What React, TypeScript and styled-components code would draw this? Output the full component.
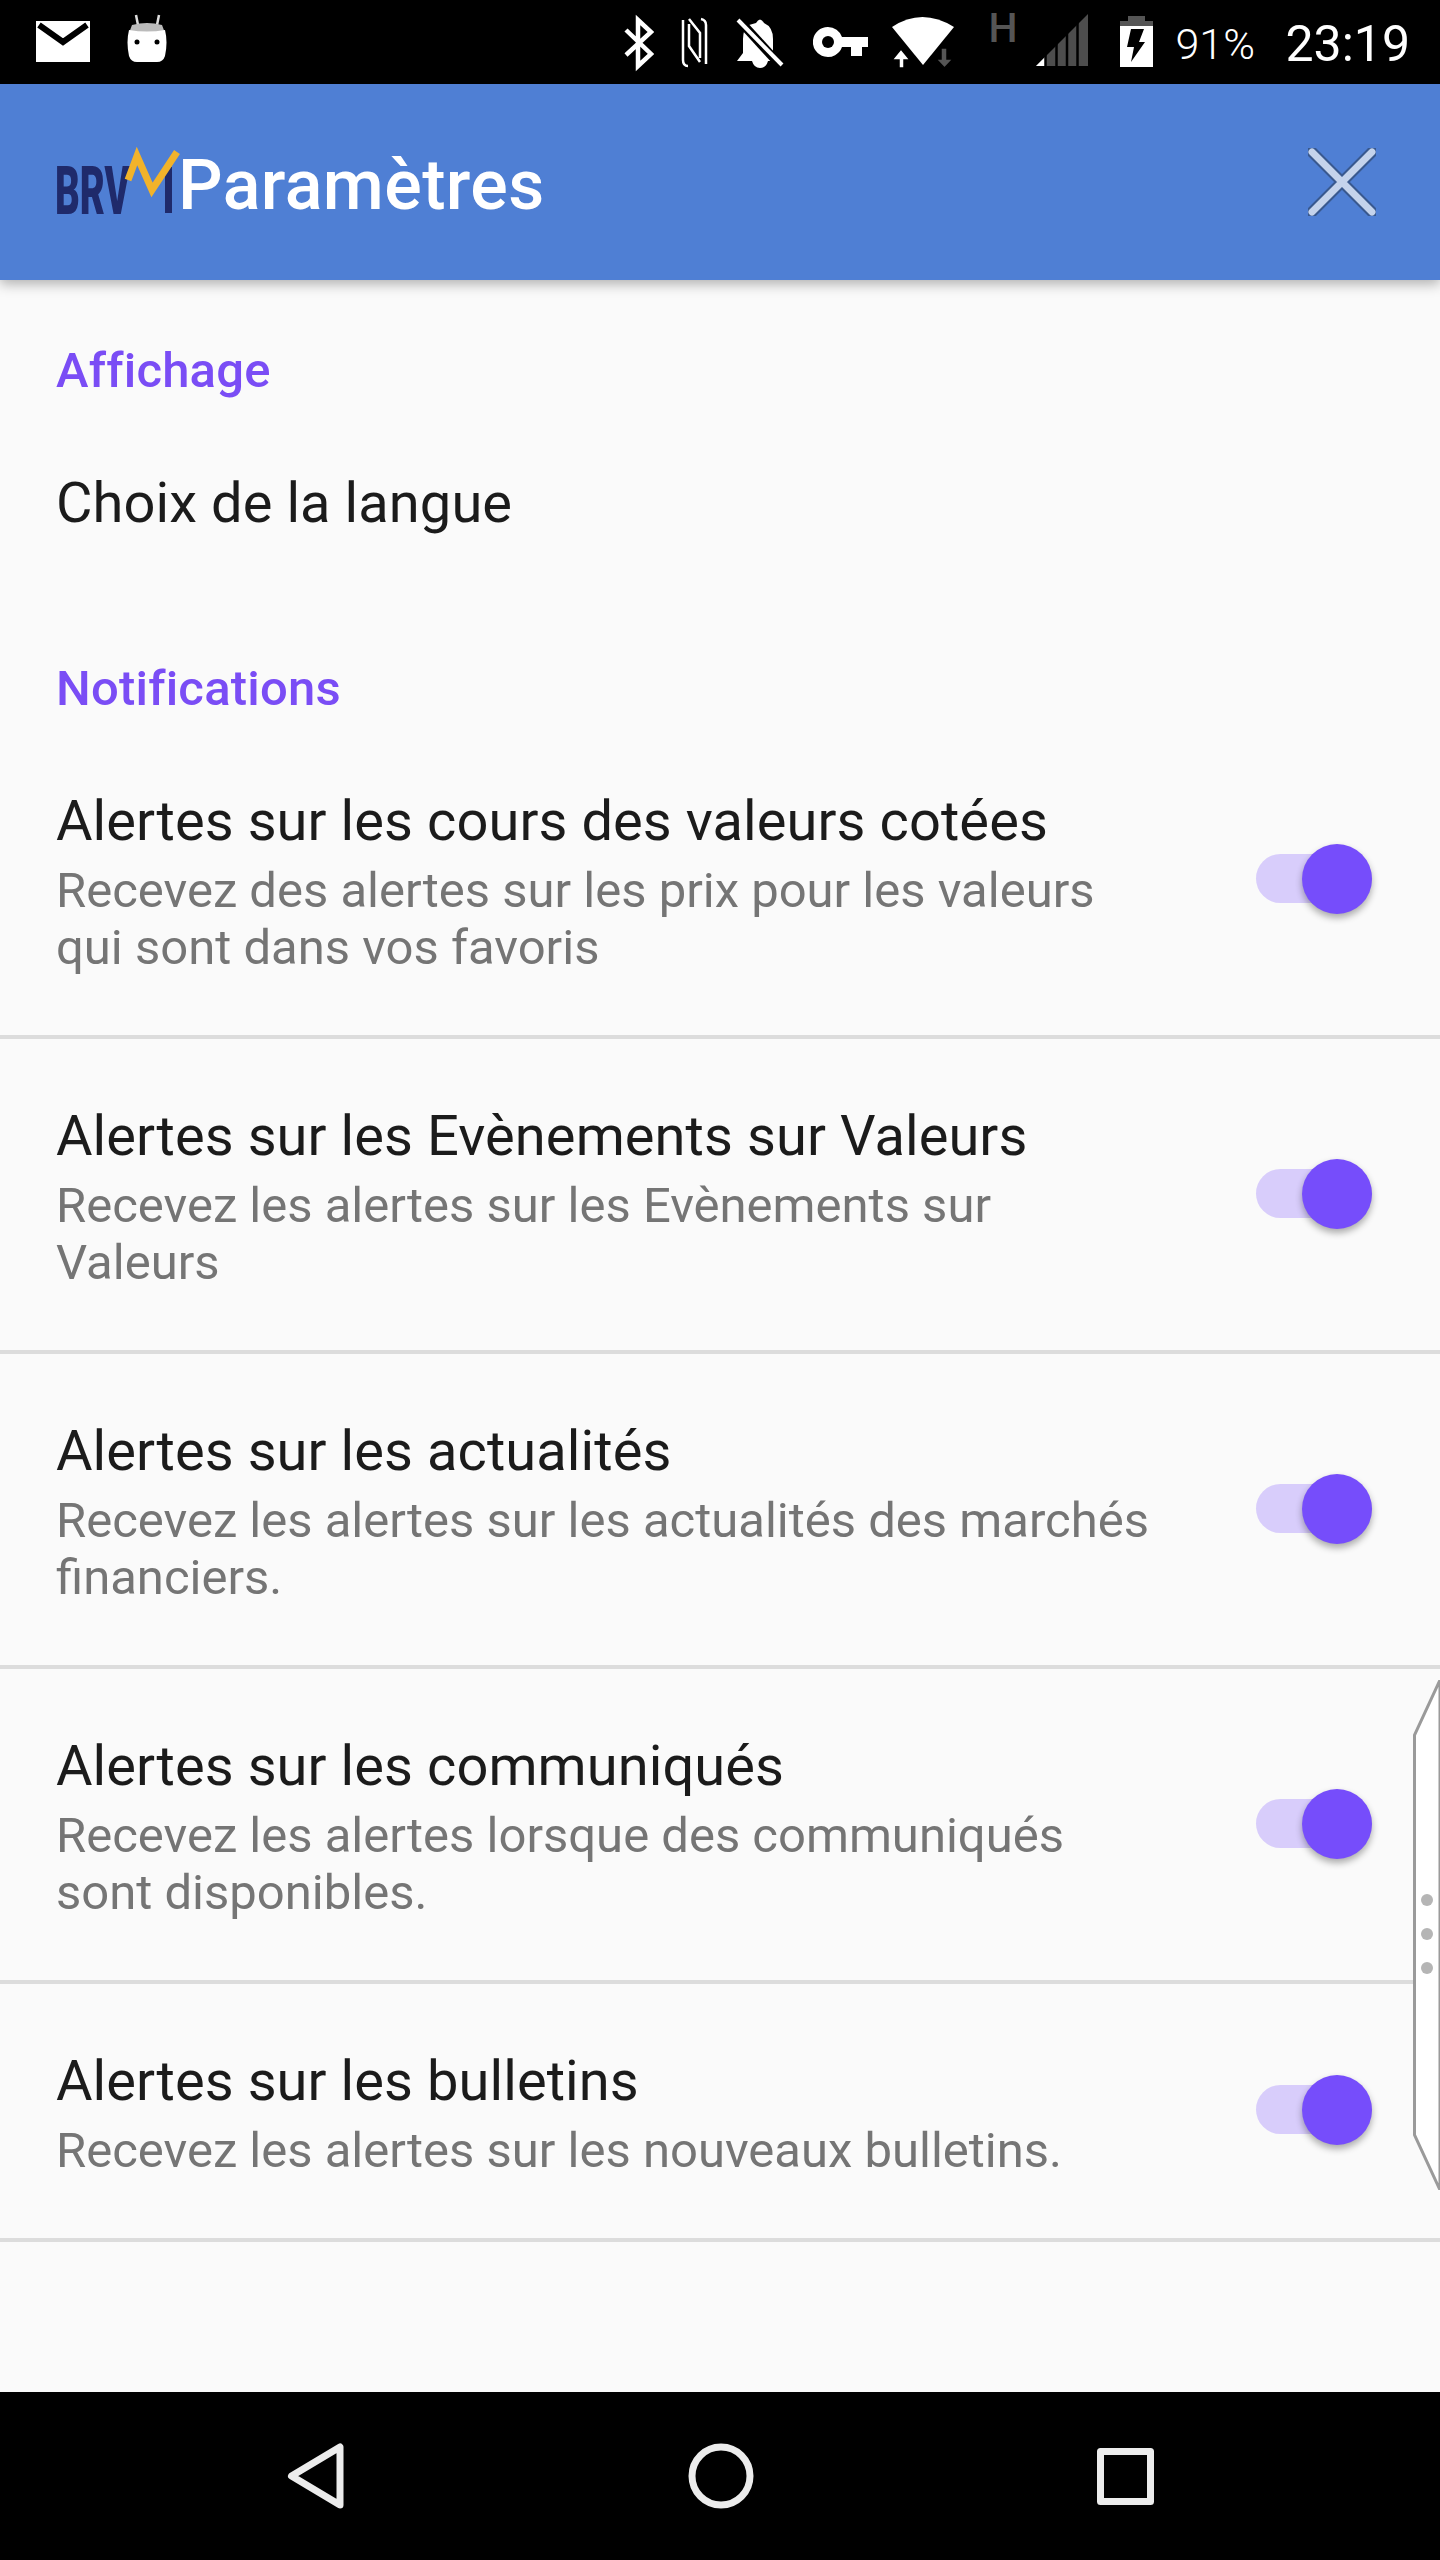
import React from "react";
import styled, { createGlobalStyle } from "styled-components";

const GlobalStyle = createGlobalStyle`
  html, body {
    margin: 0;
    padding: 0;
    background: #000;
  }
  * {
    box-sizing: border-box;
  }
`;

const Screen = styled.div`
  position: relative;
  width: 1440px;
  height: 2560px;
  display: flex;
  flex-direction: column;
  overflow: hidden;
  background: #fafafa;
  font-family: Roboto, "Noto Sans", sans-serif;
`;

const StatusBar = styled.div`
  height: 84px;
  flex: none;
  display: flex;
  align-items: stretch;
  justify-content: space-between;
  padding: 0 30px 0 36px;
  background: #000;
  color: #fff;
`;

const StatusGroup = styled.div`
  display: flex;
  align-items: stretch;
`;

const StatusIcon = styled.svg<{ $gap?: number }>`
  height: 84px;
  flex: none;
  margin-left: ${(p) => p.$gap ?? 0}px;
`;

const NetworkLetter = styled.span`
  margin-left: 34px;
  width: 26px;
  font-size: 41px;
  font-weight: 500;
  line-height: 56px;
  color: #555;
`;

const BatteryText = styled.span`
  margin-left: 22px;
  width: 77px;
  font-size: 43px;
  font-weight: 300;
  line-height: 88px;
  white-space: nowrap;
`;

const Clock = styled.span`
  margin-left: 33px;
  font-size: 50px;
  line-height: 88px;
  white-space: nowrap;
`;

const Toolbar = styled.header`
  position: relative;
  z-index: 1;
  height: 196px;
  flex: none;
  display: flex;
  align-items: center;
  padding: 0 64px 0 56px;
  background: #4f7fd4;
  box-shadow: 0 4px 12px rgba(0, 0, 0, 0.3);
`;

const Logo = styled.svg`
  width: 122px;
  height: 80px;
  flex: none;
  margin-top: 20px;
  overflow: visible;
`;

const ToolbarTitle = styled.h1`
  flex: 1;
  margin: 0;
  padding-top: 6px;
  font-size: 70px;
  font-weight: 500;
  letter-spacing: 0.4px;
  line-height: 82px;
  color: #fff;
`;

const CloseIcon = styled.svg`
  width: 68px;
  height: 68px;
  flex: none;
`;

const Content = styled.main`
  flex: 1;
`;

const SectionTitle = styled.h2<{ $top: number; $bottom: number }>`
  margin: ${(p) => p.$top}px 0 ${(p) => p.$bottom}px 56px;
  font-size: 49px;
  font-weight: 500;
  letter-spacing: 0.2px;
  line-height: 57px;
  color: #7a4df5;
`;

const PlainRow = styled.div`
  padding: 57px 56px 0;
  margin-bottom: 118px;
  font-size: 56px;
  letter-spacing: 0.08px;
  line-height: 78px;
  color: #1b1b1b;
`;

const Row = styled.div`
  display: flex;
  align-items: center;
  gap: 100px;
  padding: 58px 68px 59px 56px;
  border-bottom: 4px solid #dcdcdc;
`;

const RowText = styled.div`
  width: 1100px;
  flex: none;
`;

const RowTitle = styled.div`
  font-size: 56px;
  letter-spacing: 0.08px;
  line-height: 78px;
  color: #1b1b1b;
  white-space: nowrap;
`;

const RowSummary = styled.div`
  margin-top: 2px;
  font-size: 49px;
  line-height: 57px;
  color: #757575;
`;

const Switch = styled.div`
  position: relative;
  width: 116px;
  height: 49px;
  flex: none;
  margin-top: -2px;
  border-radius: 25px;
  background: #d8cdfb;
`;

const Thumb = styled.div`
  position: absolute;
  top: -10px;
  right: 0;
  width: 70px;
  height: 70px;
  border-radius: 50%;
  background: #764dfb;
  box-shadow: 0 4px 7px rgba(0, 0, 0, 0.32);
`;

const EdgeHandle = styled.svg`
  position: absolute;
  right: 0;
  top: 1680px;
  width: 30px;
  height: 510px;
`;

const NavBar = styled.nav`
  height: 168px;
  flex: none;
  display: flex;
  align-items: center;
  padding-left: 281px;
  gap: 335px;
  background: #000;
`;

const NavIcon = styled.svg`
  width: 70px;
  height: 70px;
  flex: none;
  fill: none;
  stroke: #ececec;
  stroke-width: 7;
  stroke-linejoin: round;
`;

const items = [
  {
    title: "Alertes sur les cours des valeurs cotées",
    summary: "Recevez des alertes sur les prix pour les valeurs qui sont dans vos favoris",
  },
  {
    title: "Alertes sur les Evènements sur Valeurs",
    summary: "Recevez les alertes sur les Evènements sur Valeurs",
  },
  {
    title: "Alertes sur les actualités",
    summary: "Recevez les alertes sur les actualités des marchés financiers.",
  },
  {
    title: "Alertes sur les communiqués",
    summary: "Recevez les alertes lorsque des communiqués sont disponibles.",
  },
  {
    title: "Alertes sur les bulletins",
    summary: "Recevez les alertes sur les nouveaux bulletins.",
  },
];

const App: React.FC = () => {
  return (
    <Screen>
      <GlobalStyle />
      <StatusBar>
        <StatusGroup>
          <StatusIcon width="54" viewBox="0 0 54 84">
            <path d="M0 21h54v41H0z" fill="#fff" />
            <path d="M3 25l24 17 24-17" fill="none" stroke="#000" strokeWidth="6" />
          </StatusIcon>
          <StatusIcon $gap={37} width="40" viewBox="0 0 40 84">
            <path d="M9 15l2 10M32 15l-2 10" stroke="#ddd" strokeWidth="2.5" />
            <path d="M5 25q15-4 30 0l3 8H2z" fill="#bbb" />
            <path d="M2 30q18 3 36 0 3 12 0 26-2 6-8 6H10q-6 0-8-6-3-14 0-26z" fill="#fff" />
            <circle cx="10" cy="42" r="2.5" fill="#000" />
            <circle cx="30" cy="42" r="2.5" fill="#000" />
          </StatusIcon>
        </StatusGroup>
        <StatusGroup>
          <StatusIcon width="30" viewBox="0 0 30 84">
            <path d="M2 30l25 24-13 12V20l13 12L2 55" fill="none" stroke="#fff" strokeWidth="4.5" />
          </StatusIcon>
          <StatusIcon $gap={27} width="27" viewBox="0 0 27 84">
            <path d="M2 20v40q0 6 5 6M25 64V25q0-5-5-6" fill="none" stroke="#fff" strokeWidth="2.5" />
            <path d="M8 19l11 14v25M19 62L8 46V24" fill="none" stroke="#fff" strokeWidth="2.5" />
          </StatusIcon>
          <StatusIcon $gap={28} width="48" viewBox="0 0 48 84">
            <path d="M20 23q4-7 8 0 9 4 9 16v14l7 8H1l6-8V39q0-10 6-14z" fill="#fff" />
            <path d="M16 61h16q-2 7-8 7t-8-7z" fill="#fff" />
            <path d="M2 19l42 46" stroke="#000" strokeWidth="9" />
            <path d="M2 20l44 45" stroke="#fff" strokeWidth="4" />
          </StatusIcon>
          <StatusIcon $gap={29} width="55" viewBox="0 0 55 84">
            <path d="M15 27a15 15 0 0 1 14 10h26v10h-6v9H38v-9h-9a15 15 0 1 1-14-20z" fill="#fff" />
            <circle cx="15" cy="42" r="6" fill="#000" />
          </StatusIcon>
          <StatusIcon $gap={24} width="62" viewBox="0 0 62 84">
            <path d="M0 27q30-20 62 0L31 65z" fill="#fff" />
            <path d="M9 49l9 11h-6v8H7v-8H0z" fill="#fff" stroke="#000" strokeWidth="1.5" />
            <path d="M49 48h6v11h6l-8.500 9-8.500-9h5z" fill="#555" stroke="#000" strokeWidth="1.5" />
          </StatusIcon>
          <NetworkLetter>H</NetworkLetter>
          <StatusIcon $gap={22} width="52" viewBox="0 0 52 84">
            <path d="M0 66l52-52v52z" fill="#4d4d4d" />
            <path d="M0 66l9-9v9z" fill="#fff" />
            <path d="M9.500 50v16M20.500 40v26M31 30v36M41.500 20v46" stroke="#000" strokeWidth="2.5" />
          </StatusIcon>
          <StatusIcon $gap={32} width="33" viewBox="0 0 33 84">
            <path d="M8 16h17v5h8v6H0v-6h8z" fill="#555" />
            <path d="M0 26h33v41H0z" fill="#fff" />
            <path d="M11 29h13l-5 13h6L11 62l3-15H7z" fill="#000" />
          </StatusIcon>
          <BatteryText>91%</BatteryText>
          <Clock>23:19</Clock>
        </StatusGroup>
      </StatusBar>

      <Toolbar>
        <Logo viewBox="0 0 122 80">
          <text
            x="-1"
            y="62"
            fontFamily="Roboto, sans-serif"
            fontWeight="900"
            fontSize="66"
            fill="#1f2a6b"
            textLength="75"
            lengthAdjust="spacingAndGlyphs"
          >
            BRV
          </text>
          <path d="M109 15h7v46h-7z" fill="#1f2a6b" />
          <path d="M72 28l9-24 15 34 25-38" fill="none" stroke="#f2b32a" strokeWidth="7" />
        </Logo>
        <ToolbarTitle>Paramètres</ToolbarTitle>
        <CloseIcon viewBox="0 0 68 68">
          <path d="M4 4l60 60M64 4L4 64" stroke="#39598f" strokeWidth="11" strokeLinecap="round" />
          <path d="M4 4l60 60M64 4L4 64" stroke="#c4d3ec" strokeWidth="7" strokeLinecap="round" />
        </CloseIcon>
      </Toolbar>

      <Content>
        <SectionTitle $top={62} $bottom={8}>
          Affichage
        </SectionTitle>
        <PlainRow>Choix de la langue</PlainRow>
        <SectionTitle $top={0} $bottom={7}>
          Notifications
        </SectionTitle>
        {items.map((item) => (
          <Row key={item.title}>
            <RowText>
              <RowTitle>{item.title}</RowTitle>
              <RowSummary>{item.summary}</RowSummary>
            </RowText>
            <Switch>
              <Thumb />
            </Switch>
          </Row>
        ))}
      </Content>

      <EdgeHandle viewBox="0 0 30 510">
        <path d="M30 0L4.500 55v400L30 510z" fill="#fff" stroke="#9a9a9a" strokeWidth="3" />
        <circle cx="17" cy="220" r="6" fill="#b5b5b5" />
        <circle cx="17" cy="254" r="6" fill="#b5b5b5" />
        <circle cx="17" cy="288" r="6" fill="#b5b5b5" />
      </EdgeHandle>

      <NavBar>
        <NavIcon viewBox="0 0 70 70">
          <path d="M59 6v58L10.500 35z" />
        </NavIcon>
        <NavIcon viewBox="0 0 70 70">
          <circle cx="35" cy="35" r="29" />
        </NavIcon>
        <NavIcon viewBox="0 0 70 70">
          <path d="M9.500 10.500h50v50h-50z" />
        </NavIcon>
      </NavBar>
    </Screen>
  );
};

export default App;
